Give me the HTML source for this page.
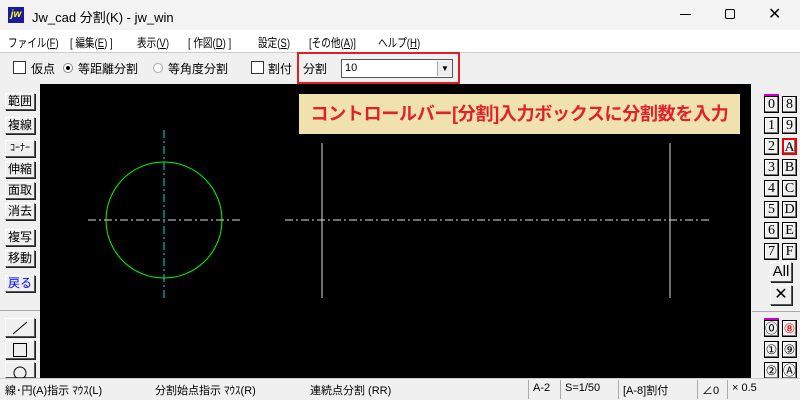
<!DOCTYPE html>
<html><head><meta charset="utf-8"><style>
*{margin:0;padding:0;box-sizing:border-box}
body{width:800px;height:400px;overflow:hidden;background:#f0f0f0;font-family:"Liberation Sans","Noto Sans CJK JP",sans-serif;font-size:12px;color:#000;position:relative}
.a{position:absolute;white-space:nowrap}
.btn{position:absolute;background:#f0f0f0;border:1px solid;border-color:#fff #555 #555 #fff;box-shadow:1px 1px 0 #222;text-align:center;font-size:12px;line-height:15px}
.nb{position:absolute;width:15px;height:17px;border:1px solid #000;background:#f0f0f0;box-shadow:inset -1px -1px 0 #777,inset 1px 1px 0 #fff;font-family:"Liberation Serif",serif;font-size:14px;text-align:center;line-height:15px}
.cb{position:absolute;width:13px;height:13px;border:1px solid #333;background:#fff}
.m{position:absolute;top:34px;font-size:12px;white-space:nowrap;transform:scaleX(0.8);transform-origin:left}
</style></head><body>
<div class="a" style="left:0;top:0;width:800px;height:30px;background:#f3f3f3"></div>
<div class="a" style="left:8px;top:7px;width:16px;height:16px;background:#1a1aa0;color:#ff0;font:italic bold 10px 'Liberation Sans';line-height:16px;text-align:center">jw</div>
<div class="a" style="left:32px;top:7px;font-size:13px">Jw_cad 分割(K) - jw_win</div>
<div class="a" style="left:680px;top:14px;width:11px;height:1px;background:#000"></div>
<div class="a" style="left:725px;top:9px;width:10px;height:10px;border:1px solid #000;border-radius:2px"></div>
<div class="a" style="left:768px;top:4px;font-size:16px">✕</div>
<div class="a" style="left:0;top:30px;width:800px;height:22px;background:#fff"></div>
<div class="m" style="left:8px">ファイル(<u>F</u>)</div>
<div class="m" style="left:70px">[ 編集(<u>E</u>) ]</div>
<div class="m" style="left:137px">表示(<u>V</u>)</div>
<div class="m" style="left:188px">[ 作図(<u>D</u>) ]</div>
<div class="m" style="left:258px">設定(<u>S</u>)</div>
<div class="m" style="left:309px">[その他(<u>A</u>)]</div>
<div class="m" style="left:378px">ヘルプ(<u>H</u>)</div>
<div class="a" style="left:0;top:52px;width:800px;height:1px;background:#ccc"></div>
<div class="cb" style="left:13px;top:61px"></div>
<div class="a" style="left:31px;top:60px">仮点</div>
<div class="a" style="left:63px;top:63px;width:10px;height:10px;border-radius:50%;border:1px solid #888;background:#fff"><div style="margin:2px;width:4px;height:4px;border-radius:50%;background:#000"></div></div>
<div class="a" style="left:78px;top:60px">等距離分割</div>
<div class="a" style="left:153px;top:63px;width:10px;height:10px;border-radius:50%;border:1px solid #aaa;background:#fff"></div>
<div class="a" style="left:168px;top:60px">等角度分割</div>
<div class="cb" style="left:251px;top:61px"></div>
<div class="a" style="left:268px;top:60px">割付</div>
<div class="a" style="left:297px;top:52px;width:163px;height:32px;border:2px solid #e02020"></div>
<div class="a" style="left:303px;top:60px">分割</div>
<div class="a" style="left:341px;top:59px;width:112px;height:19px;border:1px solid #555;background:#fff;font-size:11px;padding-left:3px;line-height:17px">10</div>
<div class="a" style="left:437px;top:61px;width:15px;height:15px;background:#eee;border-left:1px solid #aaa;font-size:8px;text-align:center;line-height:15px">▼</div>
<div class="a" style="left:40px;top:84px;width:711px;height:294px;background:#000"></div>
<svg class="a" style="left:40px;top:84px" width="711" height="294">
<circle cx="124" cy="136" r="58" fill="none" stroke="#00ff00" stroke-width="1"/>
<line x1="124" y1="46" x2="124" y2="214" stroke="#00e0e0" stroke-dasharray="8,3,2,3"/>
<line x1="48" y1="136" x2="200" y2="136" stroke="#ddd" stroke-dasharray="8,3,2,3"/>
<line x1="245" y1="136" x2="670" y2="136" stroke="#ddd" stroke-dasharray="8,3,2,3"/>
<line x1="282" y1="59" x2="282" y2="214" stroke="#ddd"/>
<line x1="630" y1="59" x2="630" y2="214" stroke="#ddd"/>
</svg>
<div class="a" style="left:299px;top:94px;width:441px;height:40px;background:#f0e2ae;color:#e0202a;font-weight:bold;font-size:18px;letter-spacing:-0.3px;line-height:40px;text-align:center">コントロールバー[分割]入力ボックスに分割数を入力</div>
<div class="btn" style="left:5px;top:93px;width:30px;height:17px">範囲</div>
<div class="btn" style="left:5px;top:117px;width:30px;height:17px">複線</div>
<div class="btn" style="left:5px;top:140px;width:30px;height:17px;font-size:10px">ｺｰﾅｰ</div>
<div class="btn" style="left:5px;top:161px;width:30px;height:17px">伸縮</div>
<div class="btn" style="left:5px;top:182px;width:30px;height:17px">面取</div>
<div class="btn" style="left:5px;top:203px;width:30px;height:17px">消去</div>
<div class="btn" style="left:5px;top:229px;width:30px;height:17px">複写</div>
<div class="btn" style="left:5px;top:250px;width:30px;height:17px">移動</div>
<div class="btn" style="left:5px;top:275px;width:30px;height:17px;color:#00f">戻る</div>
<div class="a" style="left:0;top:310px;width:40px;height:1px;background:#aaa"></div>
<div class="btn" style="left:5px;top:318px;width:30px;height:19px"><svg width="28" height="17"><line x1="7" y1="15" x2="21" y2="3" stroke="#000"/></svg></div>
<div class="btn" style="left:5px;top:340px;width:30px;height:19px"><svg width="28" height="17"><rect x="7.5" y="2.5" width="13" height="13" fill="none" stroke="#000"/></svg></div>
<div class="btn" style="left:5px;top:362px;width:30px;height:16px"><svg width="28" height="15"><circle cx="14" cy="10" r="6" fill="none" stroke="#000"/></svg></div>
<div class="a" style="left:764px;top:94px;width:15px;height:2px;background:#c0c"></div>
<div class="nb" style="left:764px;top:96px">0</div><div class="nb" style="left:782px;top:96px">8</div>
<div class="nb" style="left:764px;top:117px">1</div><div class="nb" style="left:782px;top:117px">9</div>
<div class="nb" style="left:764px;top:138px">2</div><div class="nb" style="left:782px;top:138px;border:2px solid #e00;color:#000">A</div>
<div class="nb" style="left:764px;top:159px">3</div><div class="nb" style="left:782px;top:159px">B</div>
<div class="nb" style="left:764px;top:180px">4</div><div class="nb" style="left:782px;top:180px">C</div>
<div class="nb" style="left:764px;top:201px">5</div><div class="nb" style="left:782px;top:201px">D</div>
<div class="nb" style="left:764px;top:222px">6</div><div class="nb" style="left:782px;top:222px">E</div>
<div class="nb" style="left:764px;top:243px">7</div><div class="nb" style="left:782px;top:243px">F</div>
<div class="btn" style="left:770px;top:262px;width:22px;height:20px;font-size:15px;line-height:18px">All</div>
<div class="btn" style="left:770px;top:285px;width:22px;height:20px;font-size:16px;line-height:18px">✕</div>
<div class="a" style="left:752px;top:311px;width:48px;height:1px;background:#aaa"></div>
<div class="a" style="left:764px;top:318px;width:15px;height:2px;background:#c0c"></div>
<div class="nb" style="left:764px;top:320px;font-size:13px">⓪</div><div class="nb" style="left:782px;top:320px;font-size:13px;color:#e00">⑧</div>
<div class="nb" style="left:764px;top:341px;font-size:13px">①</div><div class="nb" style="left:782px;top:341px;font-size:13px">⑨</div>
<div class="nb" style="left:764px;top:362px;font-size:13px">②</div><div class="nb" style="left:782px;top:362px;font-size:13px">Ⓐ</div>
<div class="a" style="left:0;top:378px;width:800px;height:22px;background:#f0f0f0;border-top:1px solid #ccc"></div>
<div class="a" style="left:5px;top:382px;font-size:11px">線･円(A)指示 ﾏｳｽ(L)</div>
<div class="a" style="left:155px;top:382px;font-size:11px">分割始点指示 ﾏｳｽ(R)</div>
<div class="a" style="left:310px;top:382px;font-size:11px">連続点分割 (RR)</div>
<div class="a" style="left:528px;top:380px;font-size:11px;border-left:1px solid #aaa;padding:2px 4px;height:19px">A-2</div>
<div class="a" style="left:560px;top:380px;font-size:11px;border-left:1px solid #aaa;padding:2px 4px;height:19px">S=1/50</div>
<div class="a" style="left:618px;top:380px;font-size:11px;border-left:1px solid #aaa;padding:2px 4px;height:19px">[A-8]割付</div>
<div class="a" style="left:697px;top:380px;font-size:11px;border-left:1px solid #aaa;padding:2px 4px;height:19px">∠0</div>
<div class="a" style="left:727px;top:380px;font-size:11px;border-left:1px solid #aaa;padding:2px 4px;height:19px">× 0.5</div>
</body></html>
